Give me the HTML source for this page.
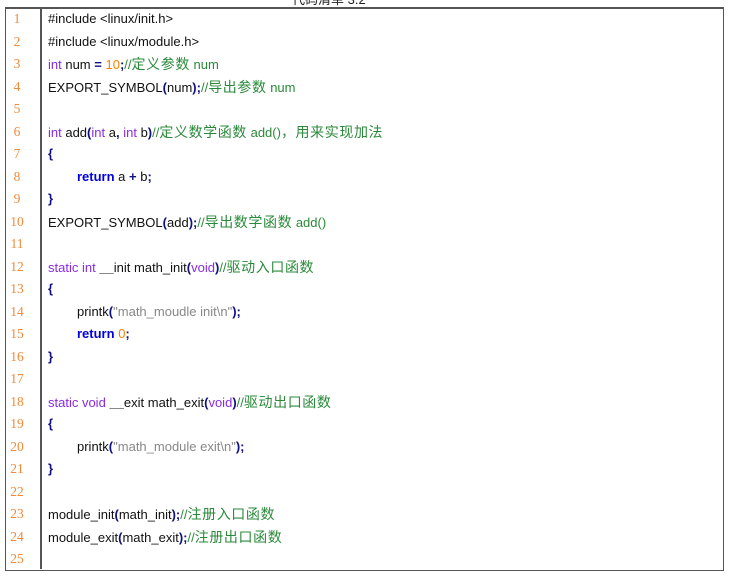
<!DOCTYPE html>
<html><head><meta charset="utf-8"><style>
body{margin:0;width:729px;height:577px;background:#fff;position:relative;overflow:hidden;font-family:"Liberation Sans","Noto Sans CJK SC",sans-serif;}
.hdr{position:absolute;left:292px;top:-11px;font-size:13px;color:#222;}
.box{position:absolute;left:5px;top:7px;width:717px;height:561px;border:1.5px solid #555;border-top:2px solid #555;}
.div{position:absolute;left:40px;top:8px;width:1.5px;height:561px;background:#555;}
.r{position:absolute;left:0;height:22px;line-height:22px;font-size:13px;white-space:nowrap;color:#111;}
.n{position:absolute;left:6px;width:22px;text-align:center;color:#f08a3a;font-family:"Liberation Serif",serif;font-size:13.5px;}
.c{position:absolute;left:48px}
.i{left:77px}
.k{color:#8a2be2}.o{color:#ff8000}.g{color:#2a8a3a}.g i{font-style:normal;font-size:14px;letter-spacing:0.6px}.s{color:#888}.b{color:#101080;font-weight:bold}.rt{color:#0000e0;font-weight:bold}
</style></head><body>
<div class="hdr">代码清单 3.2</div>
<div class="box"></div><div class="div"></div>
<div class="r" style="top:8px"><span class="n">1</span><span class="c">#include &lt;linux/init.h&gt;</span></div>
<div class="r" style="top:30.5px"><span class="n">2</span><span class="c">#include &lt;linux/module.h&gt;</span></div>
<div class="r" style="top:53px"><span class="n">3</span><span class="c"><span class="k">int</span> num <b class="b">=</b> <span class="o">10</span><b class="b">;</b><span class="g">//<i>定义参数</i> num</span></span></div>
<div class="r" style="top:75.5px"><span class="n">4</span><span class="c">EXPORT_SYMBOL<b class="b">(</b>num<b class="b">);</b><span class="g">//<i>导出参数</i> num</span></span></div>
<div class="r" style="top:98px"><span class="n">5</span></div>
<div class="r" style="top:120.5px"><span class="n">6</span><span class="c"><span class="k">int</span> add<b class="b">(</b><span class="k">int</span> a<b class="b">,</b> <span class="k">int</span> b<b class="b">)</b><span class="g">//<i>定义数学函数</i> add()<i>，用来实现加法</i></span></span></div>
<div class="r" style="top:143px"><span class="n">7</span><span class="c"><b class="b">{</b></span></div>
<div class="r" style="top:165.5px"><span class="n">8</span><span class="c i"><span class="rt">return</span> a <b class="b">+</b> b<b class="b">;</b></span></div>
<div class="r" style="top:188px"><span class="n">9</span><span class="c"><b class="b">}</b></span></div>
<div class="r" style="top:210.5px"><span class="n">10</span><span class="c">EXPORT_SYMBOL<b class="b">(</b>add<b class="b">);</b><span class="g">//<i>导出数学函数</i> add()</span></span></div>
<div class="r" style="top:233px"><span class="n">11</span></div>
<div class="r" style="top:255.5px"><span class="n">12</span><span class="c"><span class="k">static int</span> <b>__</b>init math_init<b class="b">(</b><span class="k">void</span><b class="b">)</b><span class="g">//<i>驱动入口函数</i></span></span></div>
<div class="r" style="top:278px"><span class="n">13</span><span class="c"><b class="b">{</b></span></div>
<div class="r" style="top:300.5px"><span class="n">14</span><span class="c i">printk<b class="b">(</b><span class="s">"math_moudle init\n"</span><b class="b">);</b></span></div>
<div class="r" style="top:323px"><span class="n">15</span><span class="c i"><span class="rt">return</span> <span class="o">0</span><b class="b">;</b></span></div>
<div class="r" style="top:345.5px"><span class="n">16</span><span class="c"><b class="b">}</b></span></div>
<div class="r" style="top:368px"><span class="n">17</span></div>
<div class="r" style="top:390.5px"><span class="n">18</span><span class="c"><span class="k">static void</span> <b>__</b>exit math_exit<b class="b">(</b><span class="k">void</span><b class="b">)</b><span class="g">//<i>驱动出口函数</i></span></span></div>
<div class="r" style="top:413px"><span class="n">19</span><span class="c"><b class="b">{</b></span></div>
<div class="r" style="top:435.5px"><span class="n">20</span><span class="c i">printk<b class="b">(</b><span class="s">"math_module exit\n"</span><b class="b">);</b></span></div>
<div class="r" style="top:458px"><span class="n">21</span><span class="c"><b class="b">}</b></span></div>
<div class="r" style="top:480.5px"><span class="n">22</span></div>
<div class="r" style="top:503px"><span class="n">23</span><span class="c">module_init<b class="b">(</b>math_init<b class="b">);</b><span class="g">//<i>注册入口函数</i></span></span></div>
<div class="r" style="top:525.5px"><span class="n">24</span><span class="c">module_exit<b class="b">(</b>math_exit<b class="b">);</b><span class="g">//<i>注册出口函数</i></span></span></div>
<div class="r" style="top:548px"><span class="n">25</span></div>
</body></html>
